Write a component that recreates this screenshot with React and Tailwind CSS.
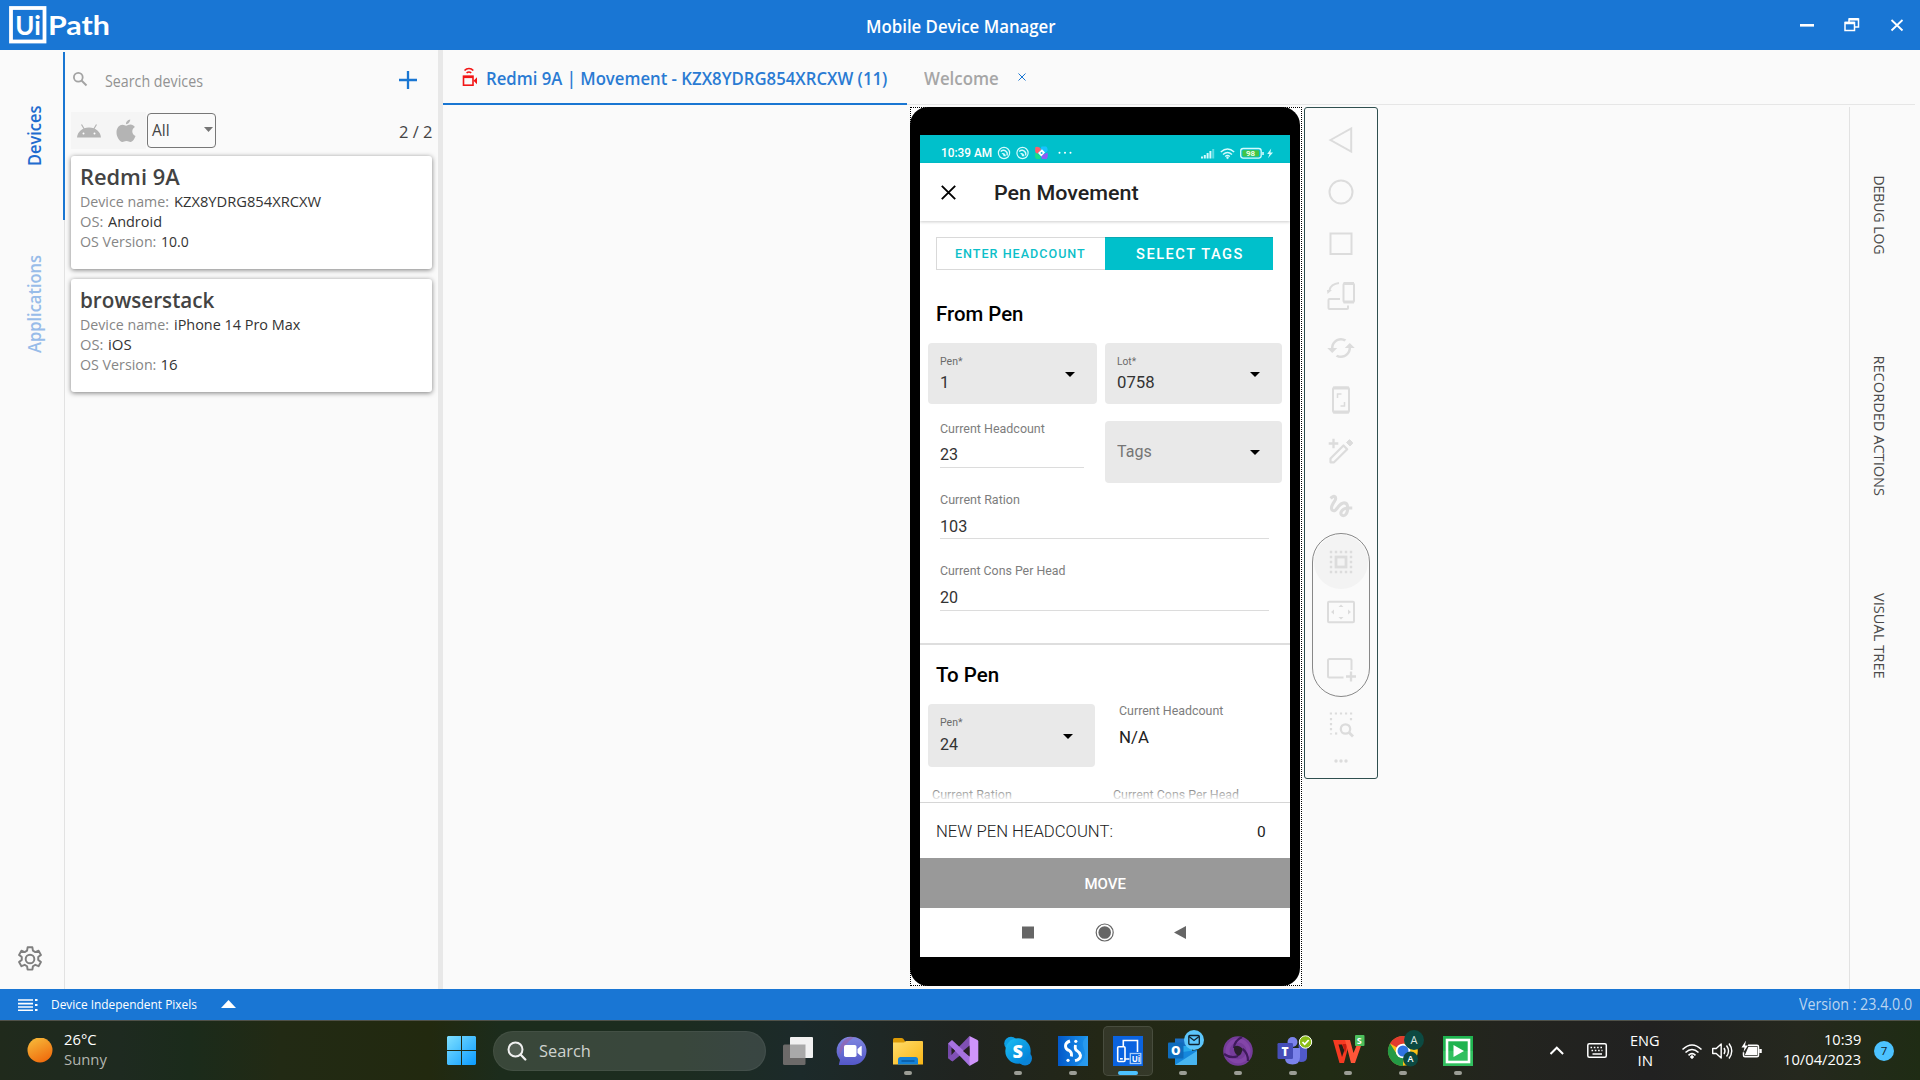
import { useLayoutEffect, useRef } from "react";
import { MdCached, MdGesture } from "react-icons/md";

/* A single line of text, condensed or widened to an exact advance width. */
function T({ w, children, className = "" }) {
  const ref = useRef(null);
  useLayoutEffect(() => {
    const el = ref.current;
    el.style.transform = `scaleX(${w / el.offsetWidth})`;
  }, [w, children]);
  return (
    <span className={`block h-5 shrink-0 leading-5 ${className}`} style={{ width: w }}>
      <span ref={ref} className="inline-block origin-left whitespace-nowrap">
        {children}
      </span>
    </span>
  );
}

function Logo() {
  return (
    <svg className="ml-2 block h-[50px] w-[110px]" viewBox="0 0 110 50">
      <rect x="3" y="8" width="33.5" height="33.5" fill="none" stroke="#fff" strokeWidth="3.8" />
      <g fill="#fff" fontFamily="Lato, 'Open Sans', sans-serif" fontWeight="700">
        <text x="7.3" y="35" fontSize="27" textLength="25.5" lengthAdjust="spacingAndGlyphs">Ui</text>
        <text x="40" y="35" fontSize="27" textLength="62" lengthAdjust="spacingAndGlyphs">Path</text>
      </g>
    </svg>
  );
}

function TitleBar() {
  return (
    <header className="flex h-[50px] items-center bg-[#1976d4]">
      <Logo />
      <T w={189.5} className="ml-[747.500px] mt-[2px] text-[18px] font-semibold text-white">Mobile Device Manager</T>
      <svg className="ml-auto mr-[15px] h-5 w-[105px]" viewBox="0 0 105 20" fill="none" stroke="#fff">
        <path d="M0 10.300h14" strokeWidth="2.600" />
        <path d="M49 8V4h9.500v8H55" strokeWidth="1.500" />
        <rect x="45" y="7.500" width="9.500" height="8" strokeWidth="1.500" />
        <path d="M45 8h9.500M49 4.300h9.500" strokeWidth="2.400" />
        <path d="M91.500 5l11 10.500M102.500 5l-11 10.500" strokeWidth="1.800" />
      </svg>
    </header>
  );
}

function Rail() {
  return (
    <nav className="flex w-[65px] shrink-0">
      <div className="flex flex-1 flex-col items-center">
        <div className="ml-[5px] mt-[56px] flex h-[59px] w-5 items-center justify-center">
          <T w={60} className="-rotate-90 text-[17.500px] font-semibold text-[#1f6ccf]">Devices</T>
        </div>
        <div className="ml-[5px] mt-[90px] flex h-[98px] w-5 items-center justify-center">
          <T w={98} className="-rotate-90 text-[17.500px] font-semibold text-[#98bce9]">Applications</T>
        </div>
        <svg className="mb-[17px] ml-[-3px] mt-auto h-[26px] w-[26px]" viewBox="0 0 24 24" fill="none" stroke="#7f7f7f" strokeWidth="1.800" strokeLinejoin="round">
          <circle cx="12" cy="12" r="4" />
          <path d="M9.800 1.200h4.400l.5 3.100 2.200 1.300 3-1.200 2.200 3.800-2.500 2v2.600l2.500 2-2.200 3.800-3-1.200-2.200 1.300-.5 3.100H9.800l-.5-3.100-2.200-1.300-3 1.200-2.200-3.800 2.500-2v-2.600l-2.500-2 2.200-3.800 3 1.200 2.200-1.300z" />
        </svg>
      </div>
      <div className="flex w-0.5 flex-col items-end pt-0.5">
        <div className="h-[168px] w-0.5 bg-[#1976d2]" />
        <div className="w-px flex-1 bg-[#e2e2e2]" />
      </div>
    </nav>
  );
}

function DeviceCard({ name, nameW, rows, className }) {
  return (
    <article className={`ml-1.5 h-[113px] w-[361px] rounded-[3px] bg-white shadow-[0_1px_5px_rgba(0,0,0,0.5)] ${className}`}>
      <T w={nameW} className="ml-[9px] mt-px pt-[11px] text-[21.500px] font-semibold text-[#434343]">{name}</T>
      <div className="ml-[8.500px] mt-[15px]">
        {rows.map(([k, kw, v, vw]) => (
          <div key={k} className="flex h-5 gap-[5px] text-[15px]">
            <T w={kw} className="text-[#868686]">{k}</T>
            <T w={vw} className="text-[#333]">{v}</T>
          </div>
        ))}
      </div>
    </article>
  );
}

function DevicePanel() {
  return (
    <aside className="w-[373px] shrink-0">
      <div className="flex h-[62px] items-center">
        <svg className="ml-[7px] mt-[-4px] h-4 w-4" viewBox="0 0 16 16" fill="none" stroke="#a3a3a3" strokeWidth="1.800">
          <circle cx="6.300" cy="6.300" r="4.400" />
          <path d="M9.500 9.500l5 5" strokeWidth="2" />
        </svg>
        <T w={97.500} className="ml-[16.500px] mt-[-1px] text-[15.500px] text-[#929292]">Search devices</T>
        <svg className="ml-[196px] mt-[-2px] h-5 w-5" viewBox="0 0 20 20" stroke="#1976d2" strokeWidth="2.300">
          <path d="M1 10h18M10 1v18" />
        </svg>
      </div>
      <div className="flex h-[37px] items-start">
        <div className="ml-1.5 flex h-[37px] w-[75px] bg-[#f5f5f5]">
          <svg className="ml-1.5 mt-[11px] h-[15px] w-6" viewBox="0 0 24 15" fill="#b4b4b4">
            <path d="M0 14.500C.5 9 5 4.500 12 4.500s11.500 4.500 12 10z" />
            <path d="M4.500 1.500l3 5M19.500 1.500l-3 5" stroke="#b4b4b4" strokeWidth="1.200" />
            <circle cx="6.500" cy="10.500" r="1" fill="#fff" />
            <circle cx="17.500" cy="10.500" r="1" fill="#fff" />
          </svg>
          <svg className="ml-[15px] mt-[7px] h-6 w-5" viewBox="0 0 20 24" fill="#b4b4b4">
            <path d="M14.200 0.500c.2 2-1.800 4.700-4.200 4.700C9.700 3 11.900.8 14.200.5z" />
            <path d="M10.200 6.800c1 0 2.300-1.200 4.300-1.200 1.700 0 3.400.9 4.400 2.400-3.800 2.200-3.200 7.400.6 8.900-.9 2.600-2.800 5.800-4.900 6-1.500.1-2-1-4.100-1s-2.600 1-4.100 1C3.600 22.800.5 17.800.5 13.500c0-4.800 3-7.700 6-7.700 1.600 0 2.700 1 3.700 1z" />
          </svg>
        </div>
        <div className="ml-[1px] mt-px flex h-[35px] w-[69px] items-center rounded-sm border border-[#777]">
          <T w={18} className="ml-[4px] mt-[-1px] text-[15.500px] text-[#444]">All</T>
          <svg className="ml-[33.500px] mt-[-3px] h-[5px] w-[9px]" viewBox="0 0 9 5" fill="#757575"><path d="M0 0h9L4.500 5z" /></svg>
        </div>
        <T w={33} className="ml-[182.500px] mt-[10px] text-[15.500px] text-[#444]">2 / 2</T>
      </div>
      <DeviceCard
        className="mt-[7px]"
        name="Redmi 9A"
        nameW={99.500}
        rows={[["Device name:", 89, "KZX8YDRG854XRCXW", 147], ["OS:", 23.500, "Android", 54], ["OS Version:", 76, "10.0", 28]]}
      />
      <DeviceCard
        className="mt-[10px]"
        name="browserstack"
        nameW={134.500}
        rows={[["Device name:", 89, "iPhone 14 Pro Max", 126], ["OS:", 23.500, "iOS", 24], ["OS Version:", 76, "16", 17]]}
      />
    </aside>
  );
}

function Tabs() {
  return (
    <div className="flex h-[55px] shrink-0">
      <div className="flex w-[464px] shrink-0 items-center border-b-2 border-[#1976d2]">
        <svg className="ml-[19px] mt-px h-5 w-4" viewBox="0 0 16 20" fill="none" stroke="#f21616" strokeWidth="1.600">
          <path d="M2.500 3.500C5 .8 9 .8 11.300 3.500" />
          <path d="M4.600 6c1.400-1.400 3.300-1.400 4.600 0" />
          <rect x="1.500" y="9.200" width="9.500" height="9" />
          <path d="M1.500 10h9.500" strokeWidth="2.200" />
          <path d="M11.500 13.700L15 10.300v7z" fill="#f21616" stroke="none" />
        </svg>
        <T w={401.500} className="ml-2 mt-[3px] text-[17.500px] font-semibold text-[#2a7bd3]">Redmi 9A | Movement - KZX8YDRG854XRCXW (11)</T>
      </div>
      <div className="mr-[5px] flex flex-1 items-center border-b border-[#e6e6e6]">
        <T w={75} className="ml-[17px] mt-[1px] text-[17.500px] font-semibold text-[#a6a6a6]">Welcome</T>
        <svg className="ml-[19px] h-2 w-2" viewBox="0 0 8 8" stroke="#1976d2" strokeWidth="1"><path d="M.5.5l7 7M7.500.5l-7 7" /></svg>
      </div>
    </div>
  );
}

function Caret({ className }) {
  return (
    <svg className={`h-[5px] w-2.5 shrink-0 ${className}`} viewBox="0 0 10 5"><path d="M0 0h10L5 5z" /></svg>
  );
}

function PhoneStatusBar() {
  return (
    <div className="flex h-7 items-center bg-[#00c0cb]">
      <T w={51} className="ml-[21px] mt-[7px] text-[12.500px] font-medium text-white">10:39 AM</T>
      <svg className="mt-[7px] h-4 w-[298px] shrink-0" viewBox="992 144.500 298 16" fill="none" stroke="#d5fbfd">
        {[1004, 1022.500].map((x) => (
          <g key={x} transform={`translate(${x} 152.500)`}>
            <circle r="5.600" strokeWidth="1.200" />
            <path d="M-3.300-1.500Q0-4.500 3-.5 3.500 1 3 2.500" strokeWidth="1.500" />
            <path d="M-2.500 .3Q1-.8 2 3.300H-.5L-.8 1.800z" fill="#d5fbfd" stroke="none" />
          </g>
        ))}
        <g stroke="none">
          <path d="M1035.500 146.500q4-1 6 2.500l-4.500 4.500q-3-2-1.500-7z" fill="#ff5d6c" />
          <path d="M1041.500 146h4.500q2 1 1.500 4.500l-3 2.500-4-4z" fill="#16c3ff" />
          <path d="M1047.500 152q1 4.500-1 6.500h-4.500l-1-3.500z" fill="#8d5bf5" />
          <path d="M1035 152.500q3 0 6 4.500l-1 1.500h-3.500q-2-1-1.500-6z" fill="#17df8a" />
          <path d="M1042 148.800l3 3.200-3.800 4-3.200-3.400z" fill="#fff" />
          <circle cx="1041.600" cy="152.400" r="1" fill="#16b8dc" />
          <g fill="#fff"><circle cx="1059.500" cy="152.300" r="1" /><circle cx="1065" cy="152.300" r="1" /><circle cx="1070.500" cy="152.300" r="1" /></g>
          <path d="M1201 156h2v2h-2zM1203.800 154.500h2v3.500h-2zM1206.600 152.500h2v5.500h-2zM1209.400 150.500h2v7.500h-2z" fill="#d5fbfd" />
          <path d="M1212.200 148.500h2v9.500h-2z" fill="#5fdde3" />
        </g>
        <path d="M1220.800 151.500q6.700-6 13.400 0M1223 154q4.500-4 9 0M1225.200 156q2.300-2 4.600 0" strokeWidth="1.400" />
        <circle cx="1227.500" cy="157.300" r=".8" fill="#d5fbfd" />
        <rect x="1240.700" y="148" width="20.500" height="9.600" rx="2.500" strokeWidth="1.300" />
        <path d="M1263 151.500v3" strokeWidth="1.600" />
        <rect x="1242.500" y="149.700" width="16.500" height="6.200" rx="1" fill="#43c443" stroke="none" />
        <text x="1246" y="155.700" fontSize="8" fontFamily="Roboto, sans-serif" fontWeight="700" fill="#e9ffe9" stroke="none">98</text>
        <path d="M1271.200 148l-4 5.600h2.300l-1.500 4.200 5-5.900h-2.600z" fill="#d5fbfd" stroke="none" />
      </svg>
    </div>
  );
}

function SelectBox({ label, labelW, value, valueW, className, caret, valueClass }) {
  return (
    <div className={`flex rounded bg-[#e9e9e9] ${className}`}>
      <div className="ml-[12px] w-[61px] pt-[9px]">
        <T w={labelW} className="text-[10.500px] text-[#6b6b6b]">{label}</T>
        <T w={valueW} className={`text-[16.500px] text-[#333] ${valueClass}`}>{value}</T>
      </div>
      <Caret className={caret} />
    </div>
  );
}

function Reading({ label, labelW, value, valueW, className, gap }) {
  return (
    <div className={`ml-5 border-b border-[#dcdcdc] ${className}`}>
      <T w={labelW} className="text-[12.600px] text-[#7d7d7d]">{label}</T>
      <T w={valueW} className={`text-[16.500px] text-[#333] ${gap}`}>{value}</T>
    </div>
  );
}

function PhoneScreen() {
  return (
    <div className="flex h-[822px] w-[370px] flex-col overflow-hidden bg-white font-[Roboto,sans-serif]">
      <PhoneStatusBar />
      <div className="flex h-[58px] shrink-0 items-center shadow-[0_1px_3px_rgba(0,0,0,0.2)]">
        <svg className="ml-[21px] h-[15px] w-[15px]" viewBox="0 0 15 15" stroke="#000" strokeWidth="1.900"><path d="M.8.8l13.400 13.400M14.200.8L.8 14.200" /></svg>
        <T w={145} className="ml-[37.500px] mt-[2px] text-[20px] font-medium text-[#222]">Pen Movement</T>
      </div>
      <div className="h-[581px] shrink-0 overflow-hidden">
        <div className="ml-4 mt-4 flex h-[33px] w-[337px]">
          <div className="flex w-[169px] items-center border border-r-0 border-[#d9d9d9]">
            <T w={131} className="ml-[18px] mt-px text-[12.700px] font-medium tracking-[1px] text-[#0dbfc9]">ENTER HEADCOUNT</T>
          </div>
          <div className="flex flex-1 items-center border-t border-[#0aa9b3] bg-[#00c0cb]">
            <T w={108} className="ml-[31px] mt-[2px] text-[14.500px] font-medium tracking-[1.500px] text-white">SELECT TAGS</T>
          </div>
        </div>
        <T w={87.500} className="ml-4 mt-[34px] text-[20.500px] font-medium text-black">From Pen</T>
        <div className="ml-2 mt-[19px] flex h-[61px] gap-2">
          <SelectBox label="Pen*" labelW={22} value="1" valueW={9} className="w-[169px]" caret="ml-[64px] mt-[28.500px]" valueClass="mt-px" />
          <SelectBox label="Lot*" labelW={19.500} value="0758" valueW={37.500} className="w-[177px]" caret="ml-[72px] mt-[28.500px]" valueClass="mt-px" />
        </div>
        <div className="mt-[14px] flex h-[65px]">
          <Reading label="Current Headcount" labelW={105} value="23" valueW={18.500} gap="mt-[6px]" className="mt-px h-[49px] w-[144px]" />
          <div className="ml-[21px] mt-[3px] flex h-[62px] w-[177px] items-center rounded bg-[#e9e9e9]">
            <T w={35} className="ml-[12px] mt-[-1px] text-[16.500px] text-[#757575]">Tags</T>
            <Caret className="ml-[98px]" />
          </div>
        </div>
        <Reading label="Current Ration" labelW={79.500} value="103" valueW={27.500} gap="mt-[7px]" className="mt-[7px] h-[49px] w-[329px]" />
        <Reading label="Current Cons Per Head" labelW={125.500} value="20" valueW={18.500} gap="mt-[6.500px]" className="mt-[22px] h-[50px] w-[329px]" />
        <div className="mt-8 h-0.5 bg-[#dedede]" />
        <T w={63} className="ml-4 mt-[20px] text-[20.500px] font-medium text-black">To Pen</T>
        <div className="ml-2 mt-[19px] flex h-[63px]">
          <SelectBox label="Pen*" labelW={22} value="24" valueW={18.500} className="w-[167px]" caret="ml-[62px] mt-[30px]" valueClass="mt-[2px]" />
          <div className="-mt-[3px] ml-[23.500px]">
            <T w={104.500} className="text-[12.600px] text-[#7d7d7d]">Current Headcount</T>
            <T w={29.500} className="mt-[7px] text-[16.500px] text-[#222]">N/A</T>
          </div>
        </div>
        <div className="relative mt-[18px] flex h-4 overflow-hidden text-[12.600px] text-[#808080]">
          <T w={79.500} className="ml-3">Current Ration</T>
          <T w={126} className="ml-[101.500px]">Current Cons Per Head</T>
          <div className="absolute inset-x-0 bottom-0 h-3 bg-linear-to-b from-transparent to-white" />
        </div>
      </div>
      <div className="flex h-14 shrink-0 items-center border-t border-[#d6d6d6]">
        <T w={177} className="ml-4 mt-[2.500px] text-[16.500px] font-light text-[#222]">NEW PEN HEADCOUNT:</T>
        <T w={9} className="ml-[144px] mt-[2px] text-[15.500px] text-[#222]">0</T>
      </div>
      <div className="flex h-[50px] shrink-0 items-center justify-center bg-[#999]">
        <T w={41} className="mt-px text-[15px] font-medium text-white">MOVE</T>
      </div>
      <svg className="h-[49px] w-[370px] shrink-0" viewBox="0 0 370 49" fill="#666">
        <rect x="102" y="18.500" width="12" height="12" />
        <circle cx="184.700" cy="24.500" r="8.500" fill="none" stroke="#666" strokeWidth="1.200" />
        <circle cx="184.700" cy="24.500" r="6.300" />
        <path d="M254 24.500l12-6.500v13z" />
      </svg>
    </div>
  );
}

function ToolIcon({ className = "", children }) {
  return (
    <svg className={`h-[30px] w-[30px] shrink-0 ${className}`} viewBox="-15 -15 30 30" fill="none" stroke="#dcdcdc" strokeWidth="2">
      {children}
    </svg>
  );
}

function Toolbar() {
  return (
    <div className="flex h-[672px] w-[74px] shrink-0 flex-col items-center rounded-[3px] border border-[#2f4f4f]">
      <ToolIcon className="mt-[16.500px]"><path d="M-10.500 0L10.200-11.500v23z" /></ToolIcon>
      <ToolIcon className="mt-[22.500px]"><circle r="11.500" /></ToolIcon>
      <ToolIcon className="mt-[22px]"><rect x="-10.500" y="-10.500" width="21" height="20.500" /></ToolIcon>
      <ToolIcon className="mt-[22px]">
        <rect x="2.500" y="-12.500" width="10.500" height="18.500" rx="1.500" />
        <path d="M2.500-12.500h10.500M2.500 6h10.500" strokeWidth="2.800" />
        <path d="M-1 3h-10.500q-1 0-1 1v8q0 1 1 1H6q1 0 1-1v-2.500" />
        <path d="M-2-13q-8 1-9.500 7" />
        <path d="M-14-6h5l-4.500 4z" fill="#dcdcdc" stroke="none" />
      </ToolIcon>
      <MdCached className="mt-[22px] h-[30px] w-[30px] shrink-0 text-[#dcdcdc]" />
      <ToolIcon className="mt-[22px]">
        <rect x="-8" y="-12.500" width="16" height="25" rx="2" />
        <path d="M-8-12h16M-8 12h16" strokeWidth="3" />
        <path d="M-3.500-2v-4h4M3.500 2v4h-4" strokeWidth="1.500" />
      </ToolIcon>
      <ToolIcon className="mt-[21px]">
        <path d="M-10.500 11.300v-3.800L2.500-5.500l3.700 3.700L-7 11.300z" strokeWidth="2.200" strokeLinejoin="round" />
        <path d="M5.500-8.500l2.500-2.500q.5-.4 1 0l2.500 2.500q.4.500 0 1L9-5z" fill="#dcdcdc" strokeWidth="1" />
        <path d="M-7.500-12.300v9.600M-12.300-7.500h9.600" strokeWidth="2.300" />
      </ToolIcon>
      <MdGesture className="mt-[25px] h-[30px] w-[30px] shrink-0 text-[#dcdcdc]" />
      <div className="mt-3 flex h-[164px] w-[58px] shrink-0 flex-col items-center rounded-full border border-[#888]">
        <div className="mt-px flex h-[54px] w-[54px] items-center justify-center rounded-full bg-[#f3f3f3]">
          <ToolIcon>
            <rect x="-5" y="-5" width="10" height="10" strokeWidth="2.800" />
            <path d="M-11.200-10h22.400M-11.200 10h22.400M-10-11.200v22.400M10-11.200v22.400" strokeWidth="2.400" strokeDasharray="2.400 2.600" />
          </ToolIcon>
        </div>
        <ToolIcon className="mt-2">
          <rect x="-13" y="-10.300" width="26" height="20.500" rx="1" />
          <path d="M-10 0l3-2.500v5zM10 0l-3-2.500v5zM0-7.500l2.500 2.500h-5zM0 7.500l2.500-2.500h-5z" fill="#dcdcdc" stroke="none" />
        </ToolIcon>
        <ToolIcon className="mt-7">
          <path d="M2.500 7.500H-11.500q-1.500 0-1.500-1.500V-9.500Q-13-11-11.500-11H9q1.500 0 1.500 1.500V0" />
          <path d="M10 1.500v10M5 6.500h10" strokeWidth="2.300" />
        </ToolIcon>
      </div>
      <ToolIcon className="mt-3">
        <path d="M-11.200-10.500h22.400" strokeWidth="2.200" strokeDasharray="2.200 2.850" />
        <path d="M-10-6v16.500M10-6v4" strokeWidth="2.200" strokeDasharray="2.200 2.850" />
        <path d="M-6 9.500h2.200" strokeWidth="2.200" />
        <circle cx="4.500" cy="5" r="4.700" strokeWidth="2.300" />
        <path d="M8 8.500l4 4" strokeWidth="2.800" />
      </ToolIcon>
      <ToolIcon className="mt-[7px]">
        <g fill="#dcdcdc" stroke="none"><circle cx="-5" r="1.700" /><circle r="1.700" /><circle cx="5" r="1.700" /></g>
      </ToolIcon>
    </div>
  );
}

function SideTab({ w, boxClass, children }) {
  return (
    <div className={`ml-[19.500px] flex w-5 items-center justify-center ${boxClass}`}>
      <T w={w} className="rotate-90 text-[15px] text-[#4a4a4a]">{children}</T>
    </div>
  );
}

function AppStatusBar() {
  return (
    <div className="flex h-[31px] items-center bg-[#1976d4] text-white">
      <svg className="ml-[18px] h-3 w-5" viewBox="0 0 20 12" stroke="#fff" strokeWidth="2">
        <path d="M0 1h15M0 4.600h15M0 8h15M0 11.300h15" strokeWidth="1.700" />
        <path d="M17 1h2.500M17 6h2.500M17 11h2.500" />
      </svg>
      <T w={145.500} className="ml-[12.500px] mt-[-2px] text-[13px]">Device Independent Pixels</T>
      <svg className="ml-[25px] mt-[-1px] h-2 w-[15px]" viewBox="0 0 15 8" fill="#fff"><path d="M0 8h15L7.500 0z" /></svg>
      <T w={113} className="ml-auto mr-2 mt-[-2px] text-[15.500px] text-[#bcd5f0]">Version : 23.4.0.0</T>
    </div>
  );
}

function TaskIcon({ run, active, children }) {
  return (
    <div className="flex h-[60px] w-[55px] shrink-0 items-center justify-center">
      <div className={`relative flex h-[50px] w-[50px] items-center justify-center rounded-[5px] ${active ? "border border-white/10 bg-white/8" : ""}`}>
        <svg className="h-10 w-10 overflow-visible" viewBox="-20 -20 40 40">{children}</svg>
        {run && <span className="absolute bottom-px h-1 w-2 rounded-full bg-[#9b9d95]" />}
        {active && <span className="absolute bottom-0 h-1 w-5 rounded-full bg-[#4cc2ff]" />}
      </div>
    </div>
  );
}

function Taskbar() {
  return (
    <footer className="flex h-[60px] items-center border-t border-[#50524a] bg-[linear-gradient(90deg,#202a1c_0,#1e2a20_120px,#1b2b1b_190px,#222a14_280px,#22290f_430px,#1c2c1c_500px,#1c2c20_680px,#1c2a2a_800px,#202420_960px,#232716_1100px,#212b14_1330px,#23241f_1510px,#212121_1650px,#25281e_1800px,#1f2c14_1920px)] font-['Open_Sans',sans-serif] text-white">
      <svg className="ml-[27px] h-[26px] w-[26px]" viewBox="0 0 26 26">
        <defs>
          <linearGradient id="sun" x1="0.200" y1="0" x2="0.700" y2="1"><stop offset="0" stopColor="#f6b93a" /><stop offset="1" stopColor="#f06a0c" /></linearGradient>
          <linearGradient id="win" x1="0" y1="0" x2="1" y2="1"><stop offset="0" stopColor="#7fe0ff" /><stop offset="1" stopColor="#0a9bff" /></linearGradient>
          <linearGradient id="folder" x1="0" y1="0" x2="1" y2="1"><stop offset="0" stopColor="#ffdc6b" /><stop offset="1" stopColor="#f9b616" /></linearGradient>
          <linearGradient id="chat" x1="0" y1="0" x2="0" y2="1"><stop offset="0" stopColor="#7f86e0" /><stop offset="1" stopColor="#5357c8" /></linearGradient>
          <linearGradient id="skype" x1="0" y1="0" x2="1" y2="1"><stop offset="0" stopColor="#1cc0f4" /><stop offset="1" stopColor="#0078d4" /></linearGradient>
          <linearGradient id="studio" x1="0" y1="0" x2="1" y2="0"><stop offset="0" stopColor="#0258c9" /><stop offset="1" stopColor="#1c96ee" /></linearGradient>
        </defs>
        <circle cx="13" cy="12" r="12.500" fill="url(#sun)" />
      </svg>
      <div className="mt-[-3px] ml-[11px] w-[382.500px] text-[15px]">
        <T w={32.500}>26°C</T>
        <T w={42.500} className="text-[#b4b6b0]">Sunny</T>
      </div>
      <svg className="h-[29px] w-[29px] shrink-0" viewBox="0 0 29 29">
        <path d="M1 0h13v14H0V1zM15 0h13l1 1v13H15zM0 15h14v14H1l-1-1zM15 15h14v13l-1 1H15z" fill="url(#win)" />
      </svg>
      <div className="ml-[17.500px] flex h-10 w-[273px] shrink-0 items-center rounded-full border border-white/5 bg-white/13">
        <svg className="ml-[12.500px] h-5 w-5" viewBox="0 0 20 20" fill="none" stroke="#f0f0f0" strokeWidth="2">
          <circle cx="8.500" cy="8.500" r="7" fill="#ffffff22" /><path d="M13.500 13.500l4.800 5" strokeLinecap="round" strokeWidth="2.300" />
        </svg>
        <T w={52} className="ml-[12px] text-[17px] text-[#cfd3cf]">Search</T>
      </div>
      <div className="ml-1 flex shrink-0">
        <TaskIcon>
          <rect x="-15" y="-6.500" width="22.500" height="20.500" rx="1.500" fill="#6c6a69" />
          <rect x="-8" y="-14" width="23" height="21" rx="1" fill="#f1f1f1" />
          <rect x="-8" y="-6.500" width="15.500" height="13.500" fill="#a9a9a9" />
        </TaskIcon>
        <TaskIcon>
          <path d="M0-14A14 14 0 1 1-1 14H-13.500q-1 0-.5-1l1-4A14 14 0 0 1 0-14z" fill="url(#chat)" />
          <path d="M-13 4A14 14 0 0 1 1-14Q-9-7-13 4z" fill="#9b5fa5" opacity=".6" />
          <rect x="-9" y="-6" width="12.500" height="12" rx="1.800" fill="#fff" />
          <path d="M4.500-2l3.500-3q.7-.3.700.5v9q0 .8-.7.500L4.500 2z" fill="#fff" />
        </TaskIcon>
        <TaskIcon run>
          <path d="M-15-11.500q0-1.500 1.500-1.500h7q1 0 1.800.8L-2.500-9H15v8h-30z" fill="#dc9a06" />
          <path d="M-15-8.500H-4l2-1.500H14q1 0 1 1V13.500h-30z" fill="url(#folder)" />
          <path d="M-10 13.500V8.500Q-10 6-7.500 6h15Q10 6 10 8.500v5z" fill="#1482d8" />
          <path d="M-6.500 10h13" stroke="#064f93" strokeWidth="1.200" />
        </TaskIcon>
        <TaskIcon>
          <path d="M-15-7.500v14.500l3.500 3L-6 5-11.500-.5l3-3z" fill="#7448a8" />
          <path d="M-15 7L6.500-15 8-4.500-10.500 10.500z" fill="#7f50b4" />
          <path d="M-15-7.500l4-3.500L8 6.500 6.500 15z" fill="#a672e0" />
          <path d="M6.500-15l8 4q.8.500.8 1.500V9q0 1-.8 1.500L6.500 15z" fill="#cf94fb" />
          <path d="M6.500-5.500v11L0 0z" fill="#262022" />
          <path d="M-11.500-3.500v7.500L-8 0z" fill="#262022" />
        </TaskIcon>
        <TaskIcon run>
          <circle cx="-7" cy="-7.500" r="6.800" fill="#0e9fe4" />
          <circle cx="7" cy="7.500" r="7" fill="#0c83d6" />
          <circle r="12.700" fill="url(#skype)" />
          <text x="-5.500" y="6.500" fontSize="18" fontWeight="800" fill="#fff">S</text>
        </TaskIcon>
        <TaskIcon run>
          <rect x="-15" y="-15" width="30" height="30" fill="url(#studio)" />
          <path d="M15-15v30H3Q15 8 11-2 7-10 15-15z" fill="#35a4f2" opacity=".5" />
          <g fill="none" stroke="#fff" strokeWidth="2.900">
            <path d="M-3-10Q-7.500-8.500-7.500-5T-3.500-.3Q-1 1.200-1.500 5.500" />
            <path d="M2.500-6Q1.500-1.500 4-.2T7.500 4.500Q7.500 8.500 2 9.700" />
          </g>
          <circle cx="-5" cy="9.300" r="1.600" fill="#fff" /><circle cx="2.800" cy="-9.700" r="1.600" fill="#fff" />
        </TaskIcon>
        <TaskIcon active>
          <rect x="-15" y="-15" width="30" height="30" fill="#0a63e0" />
          <g fill="none" stroke="#fff" strokeWidth="1.600">
            <path d="M-4.700-4.500v-6H9.500V1M1.500 8h-5" />
            <rect x="-10.300" y="-4.300" width="7.300" height="14.800" rx="1" />
            <path d="M-8 7.800h2.800" />
            <rect x="2.300" y="2.500" width="10.500" height="10" fill="#0a63e0" stroke="#a9cdf8" strokeWidth="1.300" />
          </g>
          <text x="3.800" y="10.500" fontSize="8" fontWeight="700" fill="#fff">Ui</text>
        </TaskIcon>
        <TaskIcon run>
          <path d="M-8-12.500H8q1 0 1 1V6H-8z" fill="#1a6fc4" />
          <path d="M0-5H9V4H0z" fill="#28a8ea" />
          <path d="M-8 2L14-1V13q0 1-1 1H-7q-1 0-1-1z" fill="#1587dc" />
          <path d="M-8 14L14 0V13q0 1-1 1z" fill="#48b5f0" />
          <rect x="-15" y="-8.500" width="15.500" height="16" rx="1" fill="#0f6cbd" />
          <text x="-12" y="4.300" fontSize="12" fontWeight="800" fill="#fff">O</text>
          <circle cx="11" cy="-11" r="10" fill="#5cc6fb" />
          <rect x="5.800" y="-15.500" width="10.500" height="9" rx="1" fill="none" stroke="#10222e" strokeWidth="1.300" />
          <path d="M6-14.500l5 4 5-4" fill="none" stroke="#10222e" strokeWidth="1.300" />
        </TaskIcon>
        <TaskIcon run>
          <circle r="14.800" fill="#753c9a" />
          <circle r="10.500" fill="none" stroke="#8345a8" strokeWidth="4" />
          <g fill="none" stroke="#3f1a5c" strokeWidth="2.200">
            <path d="M-4-3Q-4-10 4-14" /><path d="M4.600-2Q10 2 10 10" /><path d="M0 5Q-7 8-14 3" />
          </g>
          <path d="M-4-4q4-3 8.500 1.500Q4 4 0 5-4.500 2-4-4z" fill="#28202a" />
        </TaskIcon>
        <TaskIcon run>
          <circle cx="-.5" cy="-9" r="5" fill="#7b83eb" />
          <circle cx="9" cy="-5" r="3.500" fill="#5059c9" />
          <path d="M4-3h10V6q0 5-6 5-4 0-4-3z" fill="#5059c9" />
          <path d="M-8-3H7V6q0 7.500-7.500 7.500T-8 7z" fill="#7b83eb" />
          <rect x="-15.500" y="-8" width="15.500" height="16" rx="1.200" fill="#464eb8" />
          <text x="-11.500" y="4.500" fontSize="12" fontWeight="800" fill="#fff">T</text>
          <circle cx="12.500" cy="-9" r="6.200" fill="#8cbd18" stroke="#fff" strokeWidth="1" />
          <path d="M9.500-9l2.200 2.300 4-4.300" fill="none" stroke="#fff" strokeWidth="1.800" />
        </TaskIcon>
        <TaskIcon run>
          <path d="M-15-11H2L-4 12H-8.500z" fill="#f53a22" />
          <path d="M-9.500-6.500h3.500l2.300 6L-6 6z" fill="#221f16" />
          <path d="M-5.500-7h5L-3 2z" fill="#c31b0e" />
          <path d="M-3-11H2L5.500 2 9-6.500h4.500L7 12H3z" fill="#ff5538" />
          <rect x="7" y="-16" width="9.500" height="11" rx="1" fill="#4cbf5c" />
          <text x="8.800" y="-7" fontSize="9" fontWeight="700" fill="#fff">S</text>
        </TaskIcon>
        <TaskIcon run>
          <circle r="14.800" fill="#fbc116" />
          <path d="M0 0L-13-7.500A15 15 0 0 1 13-7.500H0z" fill="#e33b2e" />
          <path d="M0 0v14.900A14.900 14.900 0 0 1-13-7.500L-5 5z" fill="#249a45" />
          <circle r="7.300" fill="#fff" /><circle r="5.500" fill="#2f73e0" />
          <circle cx="11" cy="-11" r="10" fill="#0c4a42" />
          <text x="7.500" y="-6.800" fontSize="11" fill="#dbe7e4">A</text>
          <circle cx="7.500" cy="8" r="7.500" fill="#0c4a42" />
          <text x="4.500" y="11.300" fontSize="9" fontWeight="600" fill="#fff">A</text>
        </TaskIcon>
        <TaskIcon run>
          <rect x="-15" y="-15" width="30" height="30" fill="#1fb450" />
          <path d="M-15 0H15V15H-15z" fill="#3cc768" opacity=".6" />
          <rect x="-11" y="-11" width="22" height="22" fill="none" stroke="#fff" strokeWidth="2.600" />
          <path d="M-4.500-6L6 0-4.500 6z" fill="#fff" />
        </TaskIcon>
      </div>
      <svg className="ml-[65px] h-5 w-[58px] shrink-0" viewBox="1551 1040 58 20" fill="none" stroke="#fff">
        <path d="M1551.500 1053l6.300-6.300 6.300 6.300" strokeWidth="2" />
        <rect x="1588.800" y="1042.800" width="18.500" height="13.500" rx="1.500" strokeWidth="1.500" />
        <path d="M1591.500 1046.500h13M1592.500 1049.500h11" strokeWidth="1.500" strokeDasharray="1.600 1.700" />
        <path d="M1593.500 1053h9.500" strokeWidth="1.500" />
      </svg>
      <div className="ml-[22px] mt-[-2px] flex w-[30px] shrink-0 flex-col items-center text-[15px]">
        <T w={30}>ENG</T>
        <T w={15}>IN</T>
      </div>
      <svg className="ml-[21px] h-5 w-[82px] shrink-0" viewBox="1682 1040 82 20" fill="none" stroke="#fff" strokeWidth="1.600">
        <path d="M1683.500 1048.500q9.500-9 19 0M1686.500 1051.500q6.500-6 13 0M1689.500 1054.300q3.500-3.300 7 0" />
        <circle cx="1693" cy="1056" r="1.300" fill="#fff" strokeWidth="1" />
        <path d="M1713.700 1047.500h3.500l5-4.500v14l-5-4.500h-3.500z" strokeWidth="1.400" strokeLinejoin="round" />
        <path d="M1725 1047q2 3 0 6M1727.500 1044.500q4 5.500 0 11M1730 1042.500q5.500 7.500 0 15" strokeWidth="1.400" />
        <path d="M1749 1044.200h9q1.500 0 1.500 1.500v8.500q0 1.500-1.500 1.500h-12q-1.500 0-1.500-1.500v-3" strokeWidth="1.500" />
        <path d="M1750 1046.500h7.500v7h-10.500z" fill="#fff" />
        <path d="M1761.500 1048v4" strokeWidth="2.500" />
        <path d="M1747 1039.500l-4.500 7h3l-1 4.500 4.500-6.500h-3z" fill="#fff" stroke="none" />
      </svg>
      <div className="ml-[19px] mt-[-3px] flex w-[79px] shrink-0 flex-col items-end text-[15px]">
        <T w={37}>10:39</T>
        <T w={78.500}>10/04/2023</T>
      </div>
      <div className="ml-[13px] flex h-5 w-5 shrink-0 items-center justify-center rounded-full bg-[#4cc2ff] text-[11.500px] leading-5 text-[#10222e]">7</div>
    </footer>
  );
}

export default function App() {
  return (
    <div className="flex h-[1080px] w-[1920px] flex-col overflow-hidden bg-[#fafafa] font-['Open_Sans','Noto_Sans',sans-serif]">
      <TitleBar />
      <div className="flex h-[939px] shrink-0">
        <Rail />
        <DevicePanel />
        <div className="w-[5px] shrink-0 bg-[#e8e8e8]" />
        <main className="flex flex-1 flex-col">
          <Tabs />
          <div className="flex flex-1 pt-0.5">
            <div className="ml-[467px] h-[879px] w-[392px] shrink-0 border border-dotted border-black bg-white">
              <div className="-ml-px -mt-px h-[879px] w-[390px] rounded-[18px] bg-black px-2.5 pt-7">
                <PhoneScreen />
              </div>
            </div>
            <div className="ml-0.5"><Toolbar /></div>
            <div className="ml-auto w-[71px] border-l border-[#e2e2e2]">
              <SideTab w={79} boxClass="mt-[68px] h-[79px]">DEBUG LOG</SideTab>
              <SideTab w={141} boxClass="mt-[101px] h-[141px]">RECORDED ACTIONS</SideTab>
              <SideTab w={86} boxClass="mt-[97px] h-[86px]">VISUAL TREE</SideTab>
            </div>
          </div>
        </main>
      </div>
      <AppStatusBar />
      <Taskbar />
    </div>
  );
}
